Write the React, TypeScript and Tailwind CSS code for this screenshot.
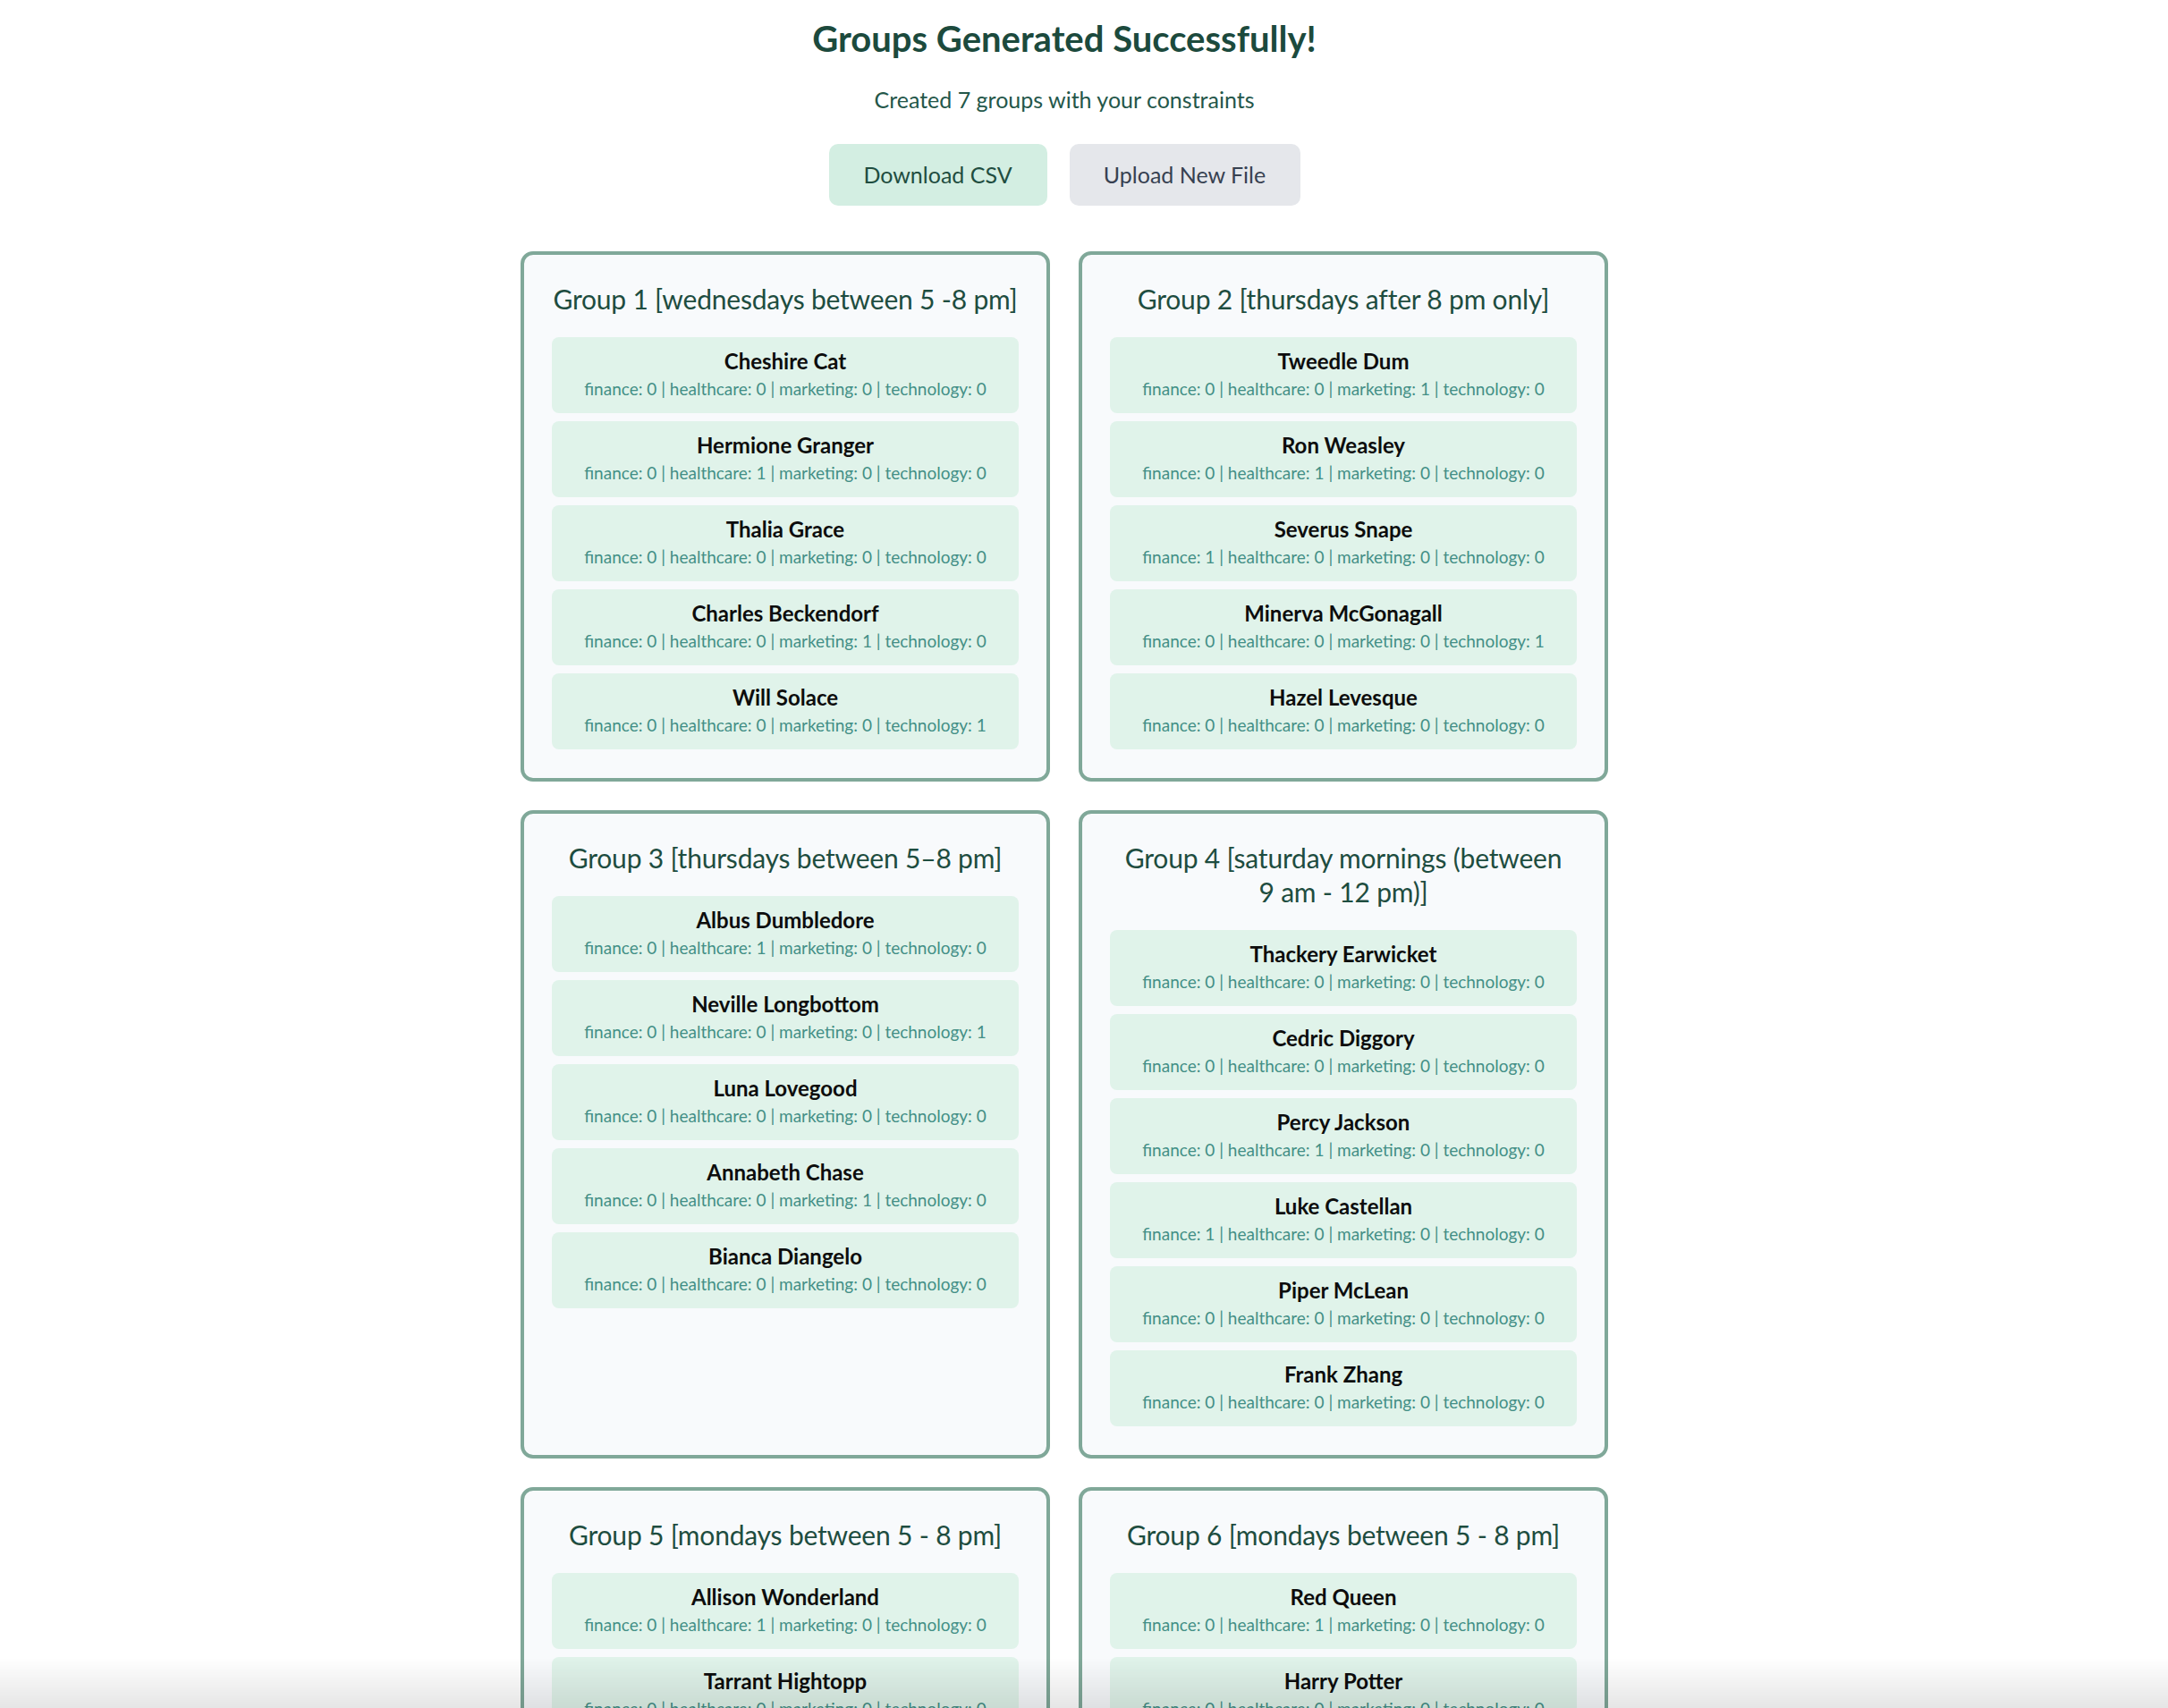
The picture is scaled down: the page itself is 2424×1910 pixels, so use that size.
type Member = {
  name: string;
  finance: number;
  healthcare: number;
  marketing: number;
  technology: number;
};

type Group = {
  title: string;
  members: Member[];
};

const m = (
  name: string,
  finance: number,
  healthcare: number,
  marketing: number,
  technology: number
): Member => ({ name, finance, healthcare, marketing, technology });

const GROUPS: Group[] = [
  {
    title: "Group 1 [wednesdays between 5 -8 pm]",
    members: [
      m("Cheshire Cat", 0, 0, 0, 0),
      m("Hermione Granger", 0, 1, 0, 0),
      m("Thalia Grace", 0, 0, 0, 0),
      m("Charles Beckendorf", 0, 0, 1, 0),
      m("Will Solace", 0, 0, 0, 1),
    ],
  },
  {
    title: "Group 2 [thursdays after 8 pm only]",
    members: [
      m("Tweedle Dum", 0, 0, 1, 0),
      m("Ron Weasley", 0, 1, 0, 0),
      m("Severus Snape", 1, 0, 0, 0),
      m("Minerva McGonagall", 0, 0, 0, 1),
      m("Hazel Levesque", 0, 0, 0, 0),
    ],
  },
  {
    title: "Group 3 [thursdays between 5–8 pm]",
    members: [
      m("Albus Dumbledore", 0, 1, 0, 0),
      m("Neville Longbottom", 0, 0, 0, 1),
      m("Luna Lovegood", 0, 0, 0, 0),
      m("Annabeth Chase", 0, 0, 1, 0),
      m("Bianca Diangelo", 0, 0, 0, 0),
    ],
  },
  {
    // nbsp keeps "9 am" together on the second line
    title: "Group 4 [saturday mornings (between 9\u00a0am - 12 pm)]",
    members: [
      m("Thackery Earwicket", 0, 0, 0, 0),
      m("Cedric Diggory", 0, 0, 0, 0),
      m("Percy Jackson", 0, 1, 0, 0),
      m("Luke Castellan", 1, 0, 0, 0),
      m("Piper McLean", 0, 0, 0, 0),
      m("Frank Zhang", 0, 0, 0, 0),
    ],
  },
  {
    title: "Group 5 [mondays between 5 - 8 pm]",
    members: [
      m("Allison Wonderland", 0, 1, 0, 0),
      m("Tarrant Hightopp", 0, 0, 0, 0),
      m("Draco Malfoy", 0, 0, 0, 1),
      m("Nico Diangelo", 1, 0, 0, 0),
      m("Ginny Weasley", 0, 0, 0, 0),
    ],
  },
  {
    title: "Group 6 [mondays between 5 - 8 pm]",
    members: [
      m("Red Queen", 0, 1, 0, 0),
      m("Harry Potter", 0, 0, 0, 0),
      m("Leo Valdez", 0, 0, 0, 1),
      m("Jason Grace", 0, 0, 1, 0),
      m("Dormouse", 0, 0, 0, 0),
    ],
  },
];

function MemberCard({ member }: { member: Member }) {
  return (
    <div className="rounded-[8px] bg-[#e0f3ea] pt-[12px] pb-[15px] text-center">
      <div className="text-[24px] leading-[30px] font-bold text-[#0d0d0d]">{member.name}</div>
      <div className="mt-[4px] text-[19px] leading-[24px] text-[#438f86]">
        finance: {member.finance} | healthcare: {member.healthcare} | marketing: {member.marketing} | technology:{" "}
        {member.technology}
      </div>
    </div>
  );
}

function GroupCard({ group }: { group: Group }) {
  return (
    <div className="rounded-[14px] border-[4px] border-[#80a899] bg-[#f8fafc] px-[31px] pt-[30px] pb-[32px]">
      <h3 className="mb-[24px] text-center text-[30px] leading-[38px] tracking-[-0.2px] font-normal text-[#1e4d40]">
        {group.title}
      </h3>
      <div className="flex flex-col gap-[9px]">
        {group.members.map((member) => (
          <MemberCard key={member.name} member={member} />
        ))}
      </div>
    </div>
  );
}

export default function App() {
  return (
    <div className="min-h-screen bg-white font-['Lato',sans-serif] pr-[44px]">
      <div className="mx-auto w-[1216px] pt-[20px] pb-[80px]">
        <h1 className="text-center text-[40px] leading-[46px] font-bold text-[#1c4a3d]">
          Groups Generated Successfully!
        </h1>
        <p className="mt-[29px] text-center text-[25px] leading-[32px] text-[#24574a]">
          Created 7 groups with your constraints
        </p>
        <div className="mt-[34px] flex justify-center gap-[25px]">
          <button className="h-[69px] w-[244px] rounded-[10px] bg-[#d3eee2] text-[25px] text-[#1f4d40]">
            Download CSV
          </button>
          <button className="h-[69px] w-[258px] rounded-[10px] bg-[#e5e7eb] text-[25px] text-[#374151]">
            Upload New File
          </button>
        </div>
        <div className="mt-[51px] grid grid-cols-2 gap-x-[32px] gap-y-[32px]">
          {GROUPS.map((group) => (
            <GroupCard key={group.title} group={group} />
          ))}
        </div>
      </div>
      <div className="pointer-events-none fixed inset-x-0 bottom-0 h-[56px] bg-gradient-to-b from-transparent to-black/10" />
    </div>
  );
}
